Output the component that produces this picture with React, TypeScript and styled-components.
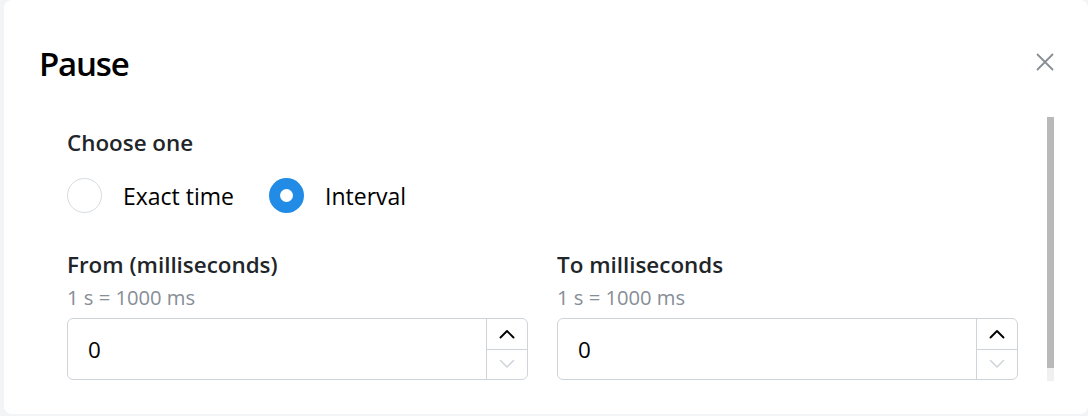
import React from "react";
import styled, { createGlobalStyle } from "styled-components";

const Global = createGlobalStyle`
  html, body { margin: 0; padding: 0; background: #f3f4f5; }
  body { font-family: "Open Sans", "Noto Sans", sans-serif; color: #212529; }
  * { box-sizing: border-box; }
`;

const Page = styled.div`
  width: 1088px;
  height: 416px;
  padding: 0 0 2px 4px;
  overflow: hidden;
`;

const Card = styled.div`
  width: 1084px;
  height: 414px;
  background: #fff;
  border-radius: 8px;
  display: flex;
  flex-direction: column;
`;

const Header = styled.div`
  display: flex;
  align-items: center;
  justify-content: space-between;
  padding: 44px 29px 0 35px;
`;

const Title = styled.h2`
  margin: 0;
  font-size: 33px;
  line-height: 40px;
  font-weight: 600;
  letter-spacing: -1.2px;
  color: #000;
`;

const CloseButton = styled.button`
  width: 28px;
  height: 28px;
  border: 0;
  background: transparent;
  padding: 0;
  margin-bottom: 4px;
  display: flex;
  align-items: center;
  justify-content: center;
  color: #868e96;
`;

const Body = styled.div`
  display: flex;
  margin-top: 33px;
  height: 264px;
  padding: 0 34px 0 63px;
`;

const Content = styled.div`
  flex: 1;
  padding-top: 10px;
  overflow: hidden;
`;

const Track = styled.div`
  width: 7px;
  margin-left: 29px;
  background: #f0f0f0;
  display: flex;
  flex-direction: column;
`;

const Thumb = styled.div`
  height: 251px;
  background: #b9b9b9;
`;

const GroupLabel = styled.div`
  font-size: 22.4px;
  line-height: 32px;
  font-weight: 600;
  color: #212529;
`;

const RadioRow = styled.div`
  display: flex;
  align-items: center;
  gap: 35px;
  margin-top: 19px;
`;

const RadioItem = styled.label`
  display: flex;
  align-items: center;
  gap: 21px;
`;

const RadioCircle = styled.span<{ $checked?: boolean }>`
  width: 35px;
  height: 35px;
  border-radius: 50%;
  border: ${(p) => (p.$checked ? "none" : "1px solid #d6dbe0")};
  background: ${(p) => (p.$checked ? "#228be6" : "#fff")};
  display: flex;
  align-items: center;
  justify-content: center;
  &::after {
    content: "";
    display: ${(p) => (p.$checked ? "block" : "none")};
    width: 13px;
    height: 13px;
    border-radius: 50%;
    background: #fff;
  }
`;

const RadioText = styled.span`
  font-size: 23px;
  line-height: 32px;
  color: #000;
`;

const Fields = styled.div`
  display: grid;
  grid-template-columns: 1fr 1fr;
  gap: 29px;
  margin-top: 36px;
`;

const Field = styled.div`
  display: flex;
  flex-direction: column;
`;

const FieldLabel = styled.div`
  font-size: 22.4px;
  line-height: 32px;
  font-weight: 600;
  color: #212529;
`;

const Description = styled.div`
  margin-top: 2px;
  font-size: 20.2px;
  line-height: 28px;
  color: #868e96;
`;

const InputBox = styled.div`
  margin-top: 7px;
  height: 62px;
  border: 1px solid #ced4da;
  border-radius: 6px;
  display: flex;
  overflow: hidden;
`;

const Value = styled.div`
  flex: 1;
  display: flex;
  align-items: center;
  padding-left: 20px;
  font-size: 22.4px;
  color: #000;
`;

const Stepper = styled.div`
  width: 41px;
  border-left: 1px solid #ced4da;
  display: flex;
  flex-direction: column;
`;

const StepButton = styled.div<{ $disabled?: boolean }>`
  flex: 1;
  display: flex;
  align-items: center;
  justify-content: center;
  color: ${(p) => (p.$disabled ? "#ced4da" : "#000")};
  & + & {
    border-top: 1px solid #ced4da;
  }
`;

const Chevron = ({ up }: { up?: boolean }) => (
  <svg width="18" height="10" viewBox="0 0 18 10" fill="none">
    <path
      d={up ? "M2.5 8.5 L9 2 L15.5 8.5" : "M2.5 1.5 L9 8 L15.5 1.5"}
      stroke="currentColor"
      strokeWidth={up ? 1.9 : 1.5}
      strokeLinecap="round"
      strokeLinejoin="round"
    />
  </svg>
);

const NumberField = ({ label }: { label: string }) => (
  <Field>
    <FieldLabel>{label}</FieldLabel>
    <Description>1 s = 1000 ms</Description>
    <InputBox>
      <Value>0</Value>
      <Stepper>
        <StepButton>
          <Chevron up />
        </StepButton>
        <StepButton $disabled>
          <Chevron />
        </StepButton>
      </Stepper>
    </InputBox>
  </Field>
);

export default function App() {
  return (
    <Page>
      <Global />
      <Card>
        <Header>
          <Title>Pause</Title>
          <CloseButton aria-label="Close">
            <svg width="18" height="18" viewBox="0 0 18 18" fill="none">
              <path d="M1.5 1.5 L16.5 16.5 M16.5 1.5 L1.5 16.5" stroke="currentColor" strokeWidth="1.8" strokeLinecap="round" />
            </svg>
          </CloseButton>
        </Header>
        <Body>
          <Content>
            <GroupLabel>Choose one</GroupLabel>
            <RadioRow>
              <RadioItem>
                <RadioCircle />
                <RadioText>Exact time</RadioText>
              </RadioItem>
              <RadioItem>
                <RadioCircle $checked />
                <RadioText>Interval</RadioText>
              </RadioItem>
            </RadioRow>
            <Fields>
              <NumberField label="From (milliseconds)" />
              <NumberField label="To milliseconds" />
            </Fields>
          </Content>
          <Track>
            <Thumb />
          </Track>
        </Body>
      </Card>
    </Page>
  );
}
